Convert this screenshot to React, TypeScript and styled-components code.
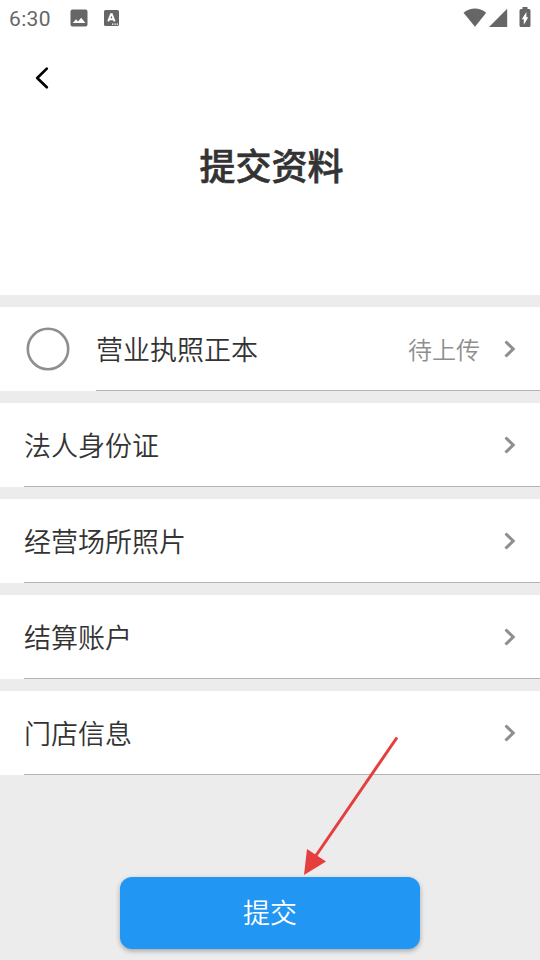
import React from "react";
import styled, { createGlobalStyle } from "styled-components";

const GlobalStyle = createGlobalStyle`
  * { box-sizing: border-box; }
  html, body { margin: 0; padding: 0; background: #ececec; }
  body { font-family: "Noto Sans CJK SC", sans-serif; color: #333; }
`;

const Screen = styled.main`
  position: relative;
  display: flex;
  flex-direction: column;
  width: 540px;
  height: 960px;
  overflow: hidden;
  background: #ececec;
`;

const Header = styled.header`
  height: 295px;
  background: #fff;
`;

const StatusBar = styled.div`
  display: flex;
  align-items: center;
  justify-content: space-between;
  height: 36px;
  padding: 0 9px;
  color: #666;
`;

const StatusGroup = styled.div<{ $lift?: number }>`
  display: flex;
  align-items: center;
  padding-bottom: ${({ $lift = 0 }) => $lift}px;
`;

const Clock = styled.span`
  width: 60px;
  font: 400 21px/36px Roboto, sans-serif;
  letter-spacing: 0.35px;
  padding-top: 2px;
`;

const StatusIcon = styled.svg<{ $gap?: number }>`
  display: block;
  flex: none;
  margin-left: ${({ $gap = 0 }) => $gap}px;
`;

const NavBar = styled.nav`
  display: flex;
  align-items: center;
  height: 84px;
  padding-left: 30px;
`;

const BackButton = styled.button`
  display: flex;
  padding: 0;
  border: 0;
  background: none;
`;

const Title = styled.h1`
  margin: 18px 0 0;
  padding-left: 3px;
  font-size: 36px;
  font-weight: 500;
  line-height: 52px;
  text-align: center;
  -webkit-text-stroke: 0.6px #333;
`;

const List = styled.section`
  display: flex;
  flex-direction: column;
  gap: 12px;
  padding-top: 12px;
`;

const Row = styled.div`
  display: flex;
  height: 84px;
  padding-left: 24px;
  background: #fff;
`;

const Leading = styled.div`
  display: flex;
  align-items: center;
  width: 72px;
`;

const Ring = styled.svg`
  display: block;
  margin-left: 2px;
`;

const RowBody = styled.div`
  display: flex;
  align-items: center;
  flex: 1;
  padding-right: 24px;
  border-bottom: 1px solid #b4b4b4;
`;

const Label = styled.span`
  flex: 1;
  font-size: 27px;
  font-weight: 350;
  line-height: 40px;
`;

const Status = styled.span`
  margin-right: 24px;
  color: #8e8e8e;
  font-size: 24px;
  font-weight: 350;
  line-height: 36px;
`;

const Footer = styled.footer`
  display: flex;
  justify-content: center;
  margin-top: 102px;
`;

const SubmitButton = styled.button`
  width: 300px;
  height: 72px;
  padding: 0 0 2px;
  border: 0;
  border-radius: 12px;
  background: #2196f3;
  box-shadow: 0 2px 5px rgba(0, 0, 0, 0.3);
  color: #fff;
  font: 350 27px/70px "Noto Sans CJK SC", sans-serif;
`;

const Pointer = styled.svg`
  position: absolute;
  left: 295px;
  top: 730px;
  pointer-events: none;
`;

const Chevron = () => (
  <svg width="12" height="18" viewBox="0 0 12 18" fill="none">
    <path d="M1.5 1.5L9.2 9L1.5 16.5" stroke="#8e8e8e" strokeWidth="3" />
  </svg>
);

const rows: { label: string; status?: string; radio?: boolean }[] = [
  { label: "营业执照正本", status: "待上传", radio: true },
  { label: "法人身份证" },
  { label: "经营场所照片" },
  { label: "结算账户" },
  { label: "门店信息" },
];

export default function App() {
  return (
    <Screen>
      <GlobalStyle />
      <Header>
        <StatusBar>
          <StatusGroup>
            <Clock>6:30</Clock>
            <StatusIcon $gap={0.5} width="18" height="18" viewBox="0 0 18 18">
              <rect x="0.5" y="0.5" width="17" height="17" rx="2" fill="#666" />
              <path d="M2.8 14L6 10.3L8 12.5L11.2 8.7L15.4 14Z" fill="#fff" />
            </StatusIcon>
            <StatusIcon $gap={16.5} width="15" height="16" viewBox="0 0 15 16">
              <rect width="15" height="16" rx="1.6" fill="#666" />
              <path d="M4.2 11.4L7 4.2H7.8L10.6 11.4M5.3 9.2H9.5" fill="none" stroke="#fff" strokeWidth="1.9" />
              <path d="M8 14.2h1.4M10.4 14.2h1.4M12.6 14.2H14" stroke="#fff" strokeWidth="1.3" />
            </StatusIcon>
          </StatusGroup>
          <StatusGroup $lift={2}>
            <StatusIcon width="24" height="20" viewBox="0 0 24 20">
              <path d="M0.5 5.8Q12-2.6 23.2 5.8L12 19.7Z" fill="#666" />
            </StatusIcon>
            <StatusIcon $gap={2} width="19" height="20" viewBox="0 0 19 20">
              <path d="M0 20L18.2 1.8V20Z" fill="#666" />
            </StatusIcon>
            <StatusIcon $gap={11} width="12" height="20" viewBox="0 0 12 20">
              <path d="M3.5 0H8.5V2H10a1.5 1.5 0 0 1 1.5 1.5V18.5a1.5 1.5 0 0 1-1.5 1.5H2A1.5 1.5 0 0 1 .5 18.5V3.5A1.5 1.5 0 0 1 2 2H3.5Z" fill="#666" />
              <path d="M7.4 5V10.2H9.3L4.8 17.8V12.2H2.8Z" fill="#fff" />
            </StatusIcon>
          </StatusGroup>
        </StatusBar>
        <NavBar>
          <BackButton aria-label="返回">
            <svg width="24" height="24" viewBox="0 0 24 24" fill="none">
              <path d="M16.8 2.6L7.2 12L16.8 21.2" stroke="#000" strokeWidth="2.7" strokeLinecap="round" strokeLinejoin="round" />
            </svg>
          </BackButton>
        </NavBar>
        <Title>提交资料</Title>
      </Header>
      <List>
        {rows.map((row) => (
          <Row key={row.label}>
            {row.radio && (
              <Leading>
                <Ring width="44" height="44" viewBox="0 0 44 44" fill="none">
                  <circle cx="22" cy="22" r="20.2" stroke="#8e8e8e" strokeWidth="2.6" />
                </Ring>
              </Leading>
            )}
            <RowBody>
              <Label>{row.label}</Label>
              {row.status && <Status>{row.status}</Status>}
              <Chevron />
            </RowBody>
          </Row>
        ))}
      </List>
      <Footer>
        <SubmitButton>提交</SubmitButton>
      </Footer>
      <Pointer width="110" height="150" viewBox="0 0 110 150">
        <path d="M102 7.5L20 127" stroke="#e53e3e" strokeWidth="3" />
        <path d="M9 145L12 119L31 131.5Z" fill="#e53e3e" />
      </Pointer>
    </Screen>
  );
}
